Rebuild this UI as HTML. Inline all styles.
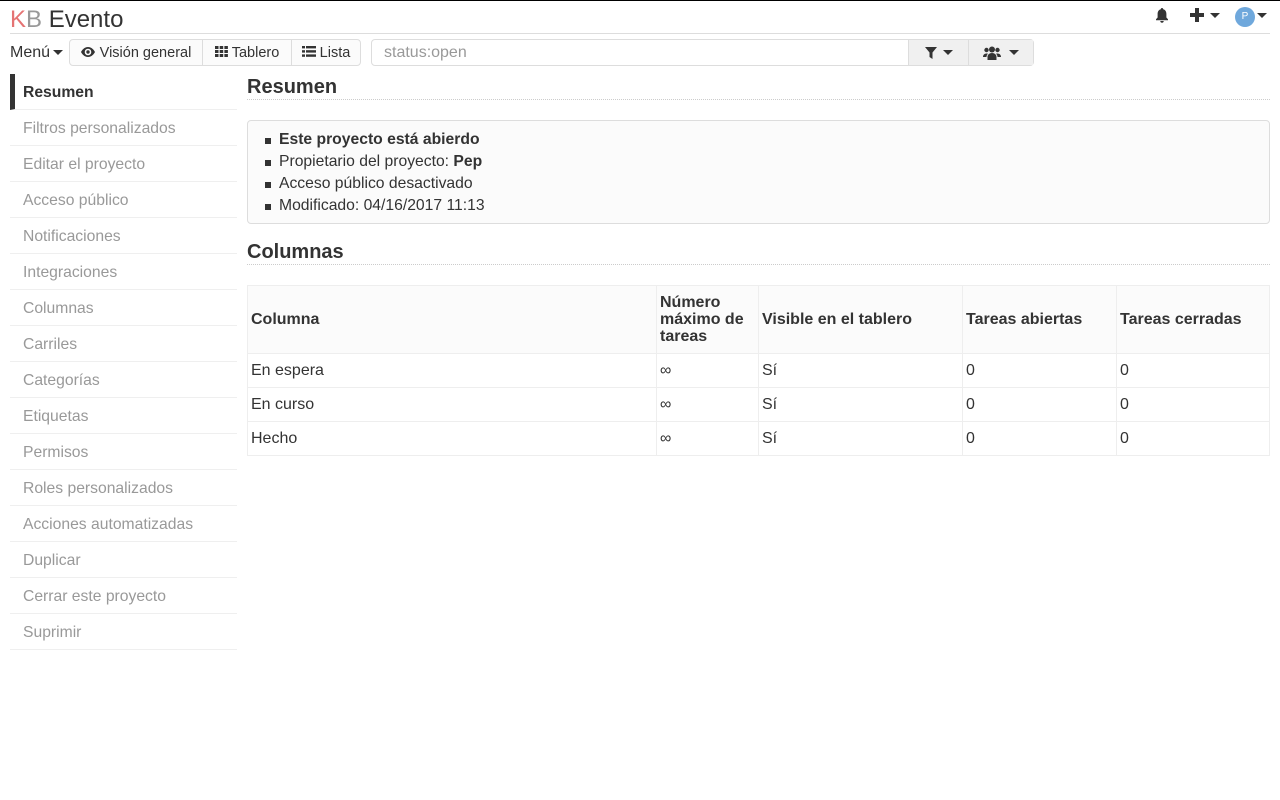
<!DOCTYPE html>
<html><head><meta charset="utf-8"><style>
*{box-sizing:border-box}
body{margin:0;font-family:"Liberation Sans",sans-serif;color:#333;background:#fff;font-size:16px;border-top:1px solid #000;width:1280px;height:800px;overflow:hidden;position:relative}
.a{position:absolute}
.title{left:10px;top:5px;font-size:24px;color:#333}
.title .k{color:#e57373}.title .b{color:#999}
.hr{left:10px;top:32px;width:1260px;height:1px;background:#ddd}
.menu{left:10px;top:43px;font-size:16px}
.caret{display:inline-block;width:0;height:0;border-left:5px solid transparent;border-right:5px solid transparent;border-top:5px solid #333;vertical-align:middle;margin-left:3px}
.btns{left:69px;top:38px;height:27px;border:1px solid #ddd;border-radius:4px;display:flex;font-size:14.5px;background:#fbfbfb}
.btns div{padding:0;text-align:center;white-space:nowrap;line-height:26px;border-right:1px solid #ddd;color:#333}
.btns div:last-child{border-right:0}
.search{left:371px;top:38px;width:663px;height:27px;border:1px solid #ddd;border-radius:4px;display:flex}
.search .in{flex:1;padding-left:12px;line-height:26px;color:#999;font-size:16px}
.search .bt{background:#f0f0f0;border-left:1px solid #ddd;display:flex;align-items:center;justify-content:center}
.side{left:10px;top:73px;width:227px}
.side div{height:36px;line-height:37px;padding-left:13px;border-bottom:1px solid #efefef;color:#999;font-size:15.7px}
.side .act{border-left:5px solid #333;padding-left:8px;color:#333;font-weight:bold}
h2{position:absolute;margin:0;font-size:20px;font-weight:bold;left:247px;width:1023px;border-bottom:1px dotted #ccc;line-height:24px;padding-bottom:0}
.panel{left:247px;width:1023px;height:104px;border:1px solid #ddd;border-radius:4px;background:#fbfbfb;padding:8px 0 0 16px}
.panel ul{margin:0;padding:0;list-style:none}
.panel li{line-height:22px;font-size:15.7px;position:relative;padding-left:15px}
.panel li:before{content:"";position:absolute;left:1px;top:9px;width:6px;height:6px;background:#333}
table{position:absolute;left:247px;width:1023px;border-collapse:collapse;font-size:16px}
td,th{border:1px solid #eee;padding:0 3px;text-align:left;height:34px}
th{background:#fbfbfb;height:68px;font-weight:bold;line-height:17px}
</style></head><body>
<div class="a title"><span class="k">K</span><span class="b">B</span> Evento</div>
<svg class="a" style="left:1154px;top:6px" width="16" height="16" viewBox="0 0 16 16"><path d="M8 1c-.8 0-1.2.6-1.2 1.2C4.6 2.8 3.6 4.6 3.6 7v3.5L2 12.3v.9h12v-.9l-1.6-1.8V7c0-2.4-1-4.2-3.2-4.8C9.2 1.6 8.8 1 8 1zM6.3 14a1.7 1.7 0 0 0 3.4 0z" fill="#333"/></svg>
<svg class="a" style="left:1190px;top:7px" width="14" height="14"><path d="M5 0h4v5h5v4H9v5H5V9H0V5h5z" fill="#333"/></svg>
<span class="a caret" style="left:1210px;top:12px;margin:0"></span>
<div class="a" style="left:1235px;top:6px;width:20px;height:20px;border-radius:50%;background:#6fa8dc;color:#fff;font-size:10px;text-align:center;line-height:20px">P</div>
<span class="a caret" style="left:1257px;top:12px;margin:0"></span>
<div class="a hr"></div>
<div class="a menu">Menú<span class="caret"></span></div>
<div class="a btns">
<div style="width:133px"><svg width="14" height="10" viewBox="0 0 14 10" style="margin-right:5px"><path d="M7 0C3.5 0 1 3 0 5c1 2 3.5 5 7 5s6-3 7-5c-1-2-3.5-5-7-5zm0 8.3A3.3 3.3 0 1 1 7 1.7a3.3 3.3 0 0 1 0 6.6zM7 3.3a1.7 1.7 0 1 0 0 3.4 1.7 1.7 0 0 0 0-3.4z" fill="#333"/></svg>Visión general</div>
<div style="width:89px"><svg width="13" height="11" viewBox="0 0 13 11" style="margin-right:4px"><g fill="#333"><rect x="0" y="0" width="3.5" height="3"/><rect x="4.7" y="0" width="3.5" height="3"/><rect x="9.4" y="0" width="3.5" height="3"/><rect x="0" y="4" width="3.5" height="3"/><rect x="4.7" y="4" width="3.5" height="3"/><rect x="9.4" y="4" width="3.5" height="3"/><rect x="0" y="8" width="3.5" height="3"/><rect x="4.7" y="8" width="3.5" height="3"/><rect x="9.4" y="8" width="3.5" height="3"/></g></svg>Tablero</div>
<div style="width:68px"><svg width="14" height="11" viewBox="0 0 14 11" style="margin-right:4px"><g fill="#333"><rect x="0" y="0" width="3" height="2.4"/><rect x="4" y="0" width="10" height="2.4"/><rect x="0" y="4.2" width="3" height="2.4"/><rect x="4" y="4.2" width="10" height="2.4"/><rect x="0" y="8.4" width="3" height="2.4"/><rect x="4" y="8.4" width="10" height="2.4"/></g></svg>Lista</div>
</div>
<div class="a search"><div class="in">status:open</div>
<div class="bt" style="width:60px"><svg width="12" height="12" viewBox="0 0 12 12"><path d="M0 0h12L7.5 5.5V12L4.5 10V5.5z" fill="#333"/></svg><span class="caret" style="margin-left:6px"></span></div>
<div class="bt" style="width:65px"><svg width="18" height="14" viewBox="0 0 18 14"><g fill="#333"><circle cx="9" cy="3.5" r="3"/><circle cx="3.5" cy="4" r="2.2"/><circle cx="14.5" cy="4" r="2.2"/><path d="M4.5 14v-3c0-2.5 2-4 4.5-4s4.5 1.5 4.5 4v3zM0 11c0-2 1.3-3.5 3.5-3.5 1 0 1.4.2 1.4.2C3.8 8.8 3.5 10 3.5 11zM18 11c0-2-1.3-3.5-3.5-3.5-1 0-1.4.2-1.4.2 1.1 1.1 1.4 2.3 1.4 3.3z"/></g></svg><span class="caret" style="margin-left:8px"></span></div>
</div>
<div class="a side">
<div class="act">Resumen</div><div>Filtros personalizados</div><div>Editar el proyecto</div><div>Acceso público</div><div>Notificaciones</div><div>Integraciones</div><div>Columnas</div><div>Carriles</div><div>Categorías</div><div>Etiquetas</div><div>Permisos</div><div>Roles personalizados</div><div>Acciones automatizadas</div><div>Duplicar</div><div>Cerrar este proyecto</div><div>Suprimir</div>
</div>
<h2 style="top:74px">Resumen</h2>
<div class="a panel" style="top:119px"><ul>
<li><b>Este proyecto está abierdo</b></li>
<li>Propietario del proyecto: <b>Pep</b></li>
<li>Acceso público desactivado</li>
<li>Modificado: 04/16/2017 11:13</li></ul></div>
<h2 style="top:239px">Columnas</h2>
<table style="top:284px">
<tr><th style="width:409px">Columna</th><th style="width:102px">Número máximo de tareas</th><th style="width:204px">Visible en el tablero</th><th style="width:154px">Tareas abiertas</th><th>Tareas cerradas</th></tr>
<tr><td>En espera</td><td>∞</td><td>Sí</td><td>0</td><td>0</td></tr>
<tr><td>En curso</td><td>∞</td><td>Sí</td><td>0</td><td>0</td></tr>
<tr><td>Hecho</td><td>∞</td><td>Sí</td><td>0</td><td>0</td></tr>
</table>
</body></html>
